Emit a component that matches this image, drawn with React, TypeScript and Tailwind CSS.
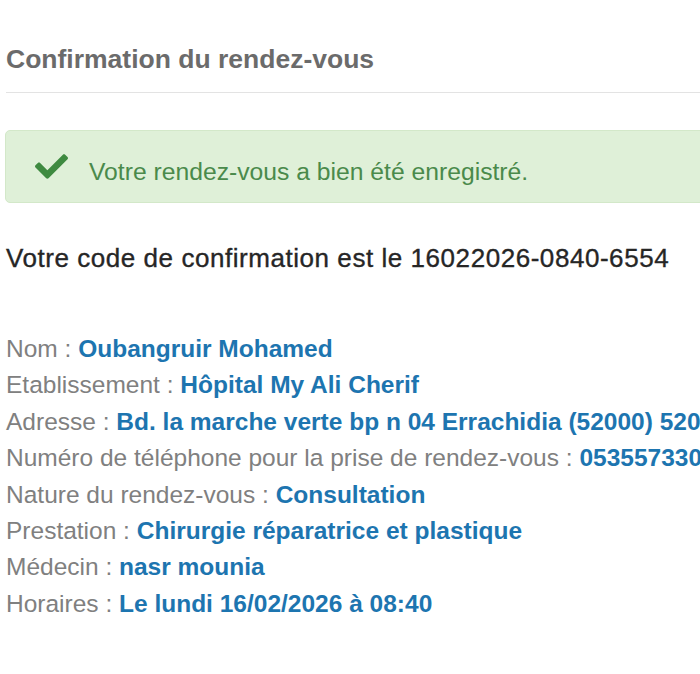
import { FaCheck } from "react-icons/fa";

const rows: [string, string][] = [
  ["Nom", "Oubangruir Mohamed"],
  ["Etablissement", "Hôpital My Ali Cherif"],
  ["Adresse", "Bd. la marche verte bp n 04 Errachidia (52000) 52000"],
  ["Numéro de téléphone pour la prise de rendez-vous", "0535573300"],
  ["Nature du rendez-vous", "Consultation"],
  ["Prestation", "Chirurgie réparatrice et plastique"],
  ["Médecin", "nasr mounia"],
  ["Horaires", "Le lundi 16/02/2026 à 08:40"],
];

export default function App() {
  return (
    <div className="h-[674px] w-[700px] overflow-hidden bg-white font-['Liberation_Sans',Arial,sans-serif]">
      <div className="w-[800px] pl-[6px] pt-[43px]">
        <h2 className="text-[26.5px] font-bold leading-[32px] text-[#6b6b6b]">
          Confirmation du rendez-vous
        </h2>
        <div className="mt-[17px] border-t border-[#e3e3e3]" />

        <div className="mt-[37px] -ml-px flex h-[73px] items-center rounded-[5px] border border-[#d3e8c9] bg-[#dff0d8] pl-[29px]">
          <FaCheck className="h-[33px] w-[33px] text-[#3e8a40]" />
          <span className="ml-[21px] pt-[11px] text-[24.7px] leading-[30px] text-[#4a8a4b]">
            Votre rendez-vous a bien été enregistré.
          </span>
        </div>

        <p className="mt-[39px] text-[26px] leading-[32px] tracking-[0.55px] text-[#262626] [-webkit-text-stroke:0.35px_#262626]">
          Votre code de confirmation est le 16022026-0840-6554
        </p>

        <div className="mt-[57px]">
          {rows.map(([label, value]) => (
            <div key={label} className="whitespace-nowrap text-[24.5px] leading-[36.4px]">
              <span className="text-[#808080]">{label} : </span>
              <span className="font-bold text-[#1d75b0]">{value}</span>
            </div>
          ))}
        </div>
      </div>
    </div>
  );
}
